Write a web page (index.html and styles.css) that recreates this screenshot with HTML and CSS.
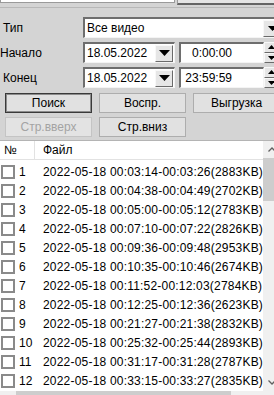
FILE: index.html
```html
<!DOCTYPE html>
<html lang="ru">
<head>
<meta charset="utf-8">
<link rel="stylesheet" href="styles.css">
</head>
<body>
<div class="app">
  <div class="top">
    <div class="top-input"></div>
    <div class="top-btn"></div>
  </div>

  <div class="form">
    <div class="frow frow-type">
      <span class="label">Тип</span>
      <div class="combo combo-type">
        <span class="combo-text">Все видео</span>
        <span class="drop"><svg width="9" height="5" viewBox="0 0 9 5"><path d="M0 0h9L4.5 5z" fill="#000"/></svg></span>
      </div>
    </div>
    <div class="frow">
      <span class="label label-start">Начало</span>
      <div class="combo combo-date">
        <span class="combo-text">18.05.2022</span>
        <span class="drop drop-date"><svg width="11" height="6" viewBox="0 0 11 6"><path d="M0 0h11L5.5 6z" fill="#000"/></svg></span>
      </div>
      <div class="combo combo-time"><span class="time-text">0:00:00</span></div>
      <div class="spin"><span class="spin-up"><svg width="7" height="4" viewBox="0 0 7 4"><path d="M0 4h7L3.5 0z" fill="#000"/></svg></span><span class="spin-down"><svg width="7" height="4" viewBox="0 0 7 4"><path d="M0 0h7L3.5 4z" fill="#000"/></svg></span></div>
    </div>
    <div class="frow">
      <span class="label">Конец</span>
      <div class="combo combo-date">
        <span class="combo-text">18.05.2022</span>
        <span class="drop drop-date"><svg width="11" height="6" viewBox="0 0 11 6"><path d="M0 0h11L5.5 6z" fill="#000"/></svg></span>
      </div>
      <div class="combo combo-time"><span class="time-text">23:59:59</span></div>
      <div class="spin"><span class="spin-up"><svg width="7" height="4" viewBox="0 0 7 4"><path d="M0 4h7L3.5 0z" fill="#000"/></svg></span><span class="spin-down"><svg width="7" height="4" viewBox="0 0 7 4"><path d="M0 0h7L3.5 4z" fill="#000"/></svg></span></div>
    </div>
  </div>

  <div class="btns">
    <button class="btn btn-default">Поиск</button>
    <button class="btn">Воспр.</button>
    <button class="btn">Выгрузка</button>
  </div>
  <div class="btns btns2">
    <button class="btn btn-disabled">Стр.вверх</button>
    <button class="btn">Стр.вниз</button>
  </div>

  <div class="list">
    <div class="list-main">
      <div class="lhead">
        <span class="hcol hcol-no">№</span>
        <span class="hcol hcol-file">Файл</span>
      </div>
      <div class="rows">
        <div class="row"><span class="cb"></span><span class="no">1</span><span class="file">2022-05-18 00:03:14-00:03:26(2883KB)</span></div>
        <div class="row"><span class="cb"></span><span class="no">2</span><span class="file">2022-05-18 00:04:38-00:04:49(2702KB)</span></div>
        <div class="row"><span class="cb"></span><span class="no">3</span><span class="file">2022-05-18 00:05:00-00:05:12(2783KB)</span></div>
        <div class="row"><span class="cb"></span><span class="no">4</span><span class="file">2022-05-18 00:07:10-00:07:22(2826KB)</span></div>
        <div class="row"><span class="cb"></span><span class="no">5</span><span class="file">2022-05-18 00:09:36-00:09:48(2953KB)</span></div>
        <div class="row"><span class="cb"></span><span class="no">6</span><span class="file">2022-05-18 00:10:35-00:10:46(2674KB)</span></div>
        <div class="row"><span class="cb"></span><span class="no">7</span><span class="file">2022-05-18 00:11:52-00:12:03(2784KB)</span></div>
        <div class="row"><span class="cb"></span><span class="no">8</span><span class="file">2022-05-18 00:12:25-00:12:36(2623KB)</span></div>
        <div class="row"><span class="cb"></span><span class="no">9</span><span class="file">2022-05-18 00:21:27-00:21:38(2832KB)</span></div>
        <div class="row"><span class="cb"></span><span class="no">10</span><span class="file">2022-05-18 00:25:32-00:25:44(2893KB)</span></div>
        <div class="row"><span class="cb"></span><span class="no">11</span><span class="file">2022-05-18 00:31:17-00:31:28(2787KB)</span></div>
        <div class="row"><span class="cb"></span><span class="no">12</span><span class="file">2022-05-18 00:33:15-00:33:27(2835KB)</span></div>
      </div>
      <div class="hscroll"><span class="hs-arrow"></span><span class="hs-thumb"></span></div>
    </div>
    <div class="vscroll">
      <span class="vs-arrow"><svg width="8" height="5" viewBox="0 0 8 5"><path d="M0.5 4.5L4 1L7.5 4.5" fill="none" stroke="#606060" stroke-width="1.3"/></svg></span>
      <span class="vs-thumb"></span>
      <span class="vs-track"></span>
      <span class="vs-arrow vs-arrow-down"><svg width="8" height="5" viewBox="0 0 8 5"><path d="M0.5 0.5L4 4L7.5 0.5" fill="none" stroke="#606060" stroke-width="1.3"/></svg></span>
    </div>
  </div>
</div>
</body>
</html>
```

FILE: styles.css
```css
html, body {
  margin: 0;
  padding: 0;
}
body {
  width: 274px;
  height: 395px;
  overflow: hidden;
  background: #d4d4d4;
  font-family: "Liberation Sans", Arial, sans-serif;
  font-size: 12px;
  color: #000;
}
.app {
  width: 274px;
  height: 395px;
  display: flex;
  flex-direction: column;
  overflow: hidden;
}
.top {
  height: 7px;
  display: flex;
  align-items: flex-end;
  gap: 2px;
  overflow: hidden;
  border-bottom: 1px solid #b8b8b8;
  flex-shrink: 0;
}
.top-input {
  width: 173px;
  height: 20px;
  flex-shrink: 0;
  background: #fff;
  border: 1px solid #9a9a9a;
  margin-bottom: 4px;
}
.top-btn {
  width: 100px;
  height: 20px;
  flex-shrink: 0;
  background: #e4e4e4;
  border: 1px solid #9a9a9a;
  border-bottom: 2px solid #646464;
  margin-bottom: 2px;
}
.form {
  display: flex;
  flex-direction: column;
  gap: 4px;
  padding-top: 9px;
}
.frow {
  display: flex;
  align-items: center;
  height: 21px;
}
.label {
  width: 83px;
  flex-shrink: 0;
  padding-left: 3px;
  box-sizing: border-box;
  padding-top: 1px;
}
.label-start {
  padding-left: 0;
}
.combo {
  height: 21px;
  box-sizing: border-box;
  background: #fff;
  border-top: 2px solid #6e6e6e;
  border-left: 2px solid #6e6e6e;
  border-bottom: 1px solid #f4f4f4;
  border-right: 1px solid #f4f4f4;
  display: flex;
  align-items: center;
  flex-shrink: 0;
}
.combo-type {
  width: 200px;
}
.combo-text {
  padding-left: 2px;
  flex: 1;
}
.drop {
  width: 11px;
  height: 17px;
  flex-shrink: 0;
  background: #e6e6e6;
  border-left: 1px solid #f8f8f8;
  border-top: 1px solid #f8f8f8;
  border-right: 1px solid #6a6a6a;
  border-bottom: 1px solid #6a6a6a;
  display: flex;
  align-items: center;
  justify-content: flex-end;
  box-sizing: border-box;
  overflow: hidden;
}
.combo-type .drop {
  width: 28px;
  justify-content: center;
  margin-right: -9px;
}
.combo-type .drop svg {
  margin-left: -10px;
}
.combo-date {
  width: 92px;
  margin-right: 4px;
}
.drop-date {
  width: 18px;
  height: 17px;
  justify-content: center;
  margin-right: 1px;
}
.combo-time {
  width: 85px;
  justify-content: flex-end;
}
.time-text {
  padding-right: 31px;
}
.spin {
  width: 14px;
  height: 21px;
  display: flex;
  flex-direction: column;
  flex-shrink: 0;
}
.spin span {
  flex: 1;
  background: #e6e6e6;
  border-top: 1px solid #f8f8f8;
  border-left: 1px solid #f8f8f8;
  border-bottom: 1px solid #6a6a6a;
  box-sizing: border-box;
  display: flex;
  align-items: center;
  padding-left: 3px;
}
.btns {
  display: flex;
  gap: 7px;
  padding-left: 5px;
  margin-top: 5px;
}
.btns2 {
  margin-top: 4px;
}
.btn {
  width: 87px;
  height: 20px;
  flex-shrink: 0;
  margin: 0;
  padding: 0;
  font-family: inherit;
  font-size: 12px;
  color: #000;
  background: #e1e1e1;
  border: 1px solid #adadad;
  box-sizing: border-box;
}
.btn-default {
  border: 1px solid #3a3a3a;
  box-shadow: inset 0 0 0 1px #8c8c8c;
}
.btn-disabled {
  color: #a3a3a3;
  border-color: #c4c4c4;
  background: #e3e3e3;
}
.list {
  margin-top: 3px;
  flex: 1;
  display: flex;
  background: #fff;
  border-top: 1px solid #b4b4b4;
  min-height: 0;
}
.list-main {
  width: 263px;
  flex-shrink: 0;
  display: flex;
  flex-direction: column;
  overflow: hidden;
}
.lhead {
  height: 18px;
  display: flex;
  align-items: center;
  border-bottom: 1px solid #e2e2e2;
  flex-shrink: 0;
}
.hcol {
  height: 18px;
  line-height: 18px;
  box-sizing: border-box;
}
.hcol-no {
  width: 35px;
  padding-left: 4px;
  border-right: 1px solid #e2e2e2;
}
.hcol-file {
  padding-left: 8px;
}
.rows {
  padding-top: 2px;
  flex-shrink: 0;
}
.row {
  height: 19px;
  display: flex;
  align-items: center;
  white-space: nowrap;
}
.cb {
  width: 14px;
  height: 14px;
  box-sizing: border-box;
  border: 2px solid #8a8a8a;
  background: #fff;
  margin-left: 1px;
  flex-shrink: 0;
}
.no {
  width: 28px;
  padding-left: 4px;
  box-sizing: border-box;
  flex-shrink: 0;
}
.file {
  letter-spacing: 0.2px;
}
.hscroll {
  height: 6px;
  display: flex;
  background: #f0f0f0;
  flex-shrink: 0;
  margin-top: 1px;
}
.hs-arrow {
  width: 16px;
  background: #f0f0f0;
}
.hs-thumb {
  width: 215px;
  background: #cdcdcd;
}
.vscroll {
  width: 17px;
  flex-shrink: 0;
  background: #f0f0f0;
  display: flex;
  flex-direction: column;
}
.vs-arrow {
  height: 17px;
  flex-shrink: 0;
  display: flex;
  align-items: center;
  padding-left: 5px;
  box-sizing: border-box;
  background: #f0f0f0;
}
.vs-thumb {
  height: 43px;
  background: #cdcdcd;
  flex-shrink: 0;
}
.vs-track {
  flex: 1;
}
.vs-arrow-down {
  margin-bottom: 4px;
}
```
